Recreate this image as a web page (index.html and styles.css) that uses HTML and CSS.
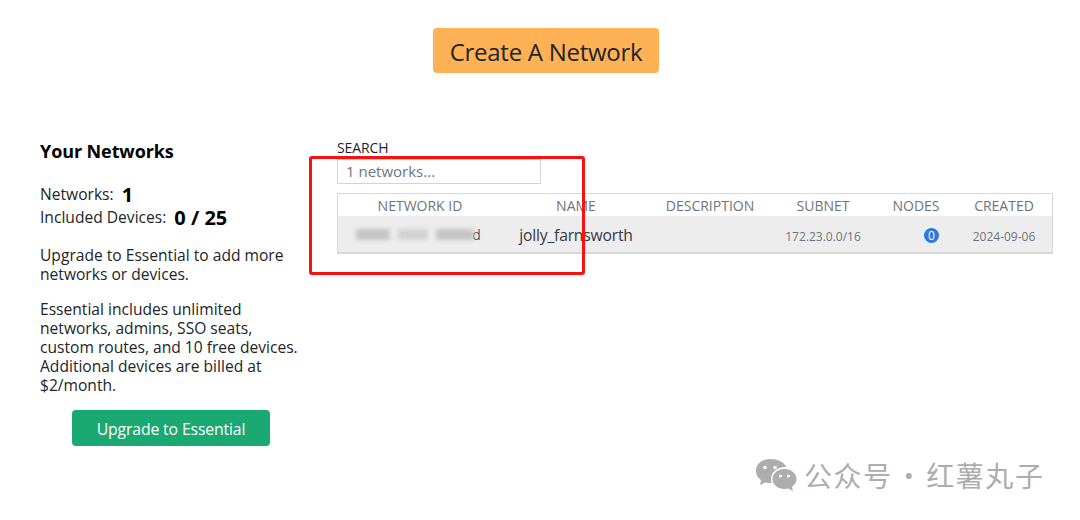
FILE: index.html
```html
<!DOCTYPE html>
<html lang="en">
<head>
<meta charset="utf-8">
<title>Networks</title>
<link rel="stylesheet" href="styles.css">
</head>
<body>
<div class="page">
  <header class="top">
    <button class="create">Create A Network</button>
  </header>
  <main class="main">
    <aside class="side">
      <h2 class="side-title">Your Networks</h2>
      <div class="stat"><span>Networks:</span><b class="stat-val">1</b></div>
      <div class="stat"><span>Included Devices:</span><b class="stat-val">0 / 25</b></div>
      <p class="para first">Upgrade to Essential to add more networks or devices.</p>
      <p class="para">Essential includes unlimited networks, admins, SSO seats, custom routes, and 10 free devices. Additional devices are billed at $2/month.</p>
      <div class="upgrade-wrap"><button class="upgrade">Upgrade to Essential</button></div>
    </aside>
    <section class="content">
      <label class="search-label" for="s">SEARCH</label>
      <input id="s" class="search" placeholder="1 networks...">
      <div class="table">
        <div class="row head">
          <div class="c-id">NETWORK ID</div>
          <div class="c-name">NAME</div>
          <div class="c-desc">DESCRIPTION</div>
          <div class="c-sub">SUBNET</div>
          <div class="c-nodes">NODES</div>
          <div class="c-created">CREATED</div>
        </div>
        <div class="row body">
          <div class="c-id id-val"><span class="blurred"><i class="b1"></i><i class="b2"></i><i class="b3"></i></span><span class="tail">d</span></div>
          <div class="c-name name-val">jolly_farnsworth</div>
          <div class="c-desc"></div>
          <div class="c-sub small">172.23.0.0/16</div>
          <div class="c-nodes"><span class="badge">0</span></div>
          <div class="c-created small">2024-09-06</div>
        </div>
      </div>
    </section>
  </main>
  <div class="annot"></div>
  <div class="mark">
    <svg class="mark-icon" width="42" height="34" viewBox="0 0 42 34">
      <path class="m" d="M15 1C7 1 1 6.300 1 13c0 3.800 2 7 5 9.200L5 27l5.300-2.600c1.500.4 3 .6 4.700.6.600 0 1.200 0 1.700-.1-.5-1.300-.7-2.600-.7-4 0-6.800 6.200-12 13.800-12 .4 0 .8 0 1.200.1C29.700 4.300 23 1 15 1z"/>
      <circle class="e" cx="10" cy="9.500" r="1.800"/><circle class="e" cx="20" cy="9.500" r="1.800"/>
      <path class="m" d="M29.500 11C22.600 11 17.500 15.500 17.500 21s5.100 10 12 10c1.300 0 2.600-.2 3.800-.5l4.700 2.500-1-4.200c2.800-1.900 4.500-4.700 4.500-7.800 0-5.500-5.100-10-12-10z"/>
      <circle class="e" cx="25.500" cy="18" r="1.600"/><circle class="e" cx="33.500" cy="18" r="1.600"/>
    </svg>
    <span class="mark-text">公众号 · 红薯丸子</span>
  </div>
</div>
</body>
</html>
```

FILE: styles.css
```css
* { box-sizing: border-box; }
html, body { margin: 0; padding: 0; background: #fff; }
.page {
  position: relative;
  width: 1080px;
  height: 520px;
  overflow: hidden;
  font-family: "Open Sans", "Noto Sans", sans-serif;
  color: #212529;
}
.top {
  display: flex;
  padding: 28px 0 0 433px;
}
.create {
  width: 226px;
  height: 45px;
  border: 0;
  border-radius: 4px;
  background: #ffb155;
  color: #212529;
  font: 24px/1 "Open Sans", sans-serif;
  letter-spacing: -0.28px;
  padding: 2px 0 0;
}
.main {
  display: flex;
  padding: 66px 0 0 40px;
}
.side {
  width: 258px;
  margin-right: 39px;
  font-size: 15.6px;
  letter-spacing: 0;
  line-height: 19px;
}
.side-title {
  margin: 1px 0 0;
  font-size: 18px;
  line-height: 22px;
  font-weight: 700;
  color: #000;
  letter-spacing: -0.1px;
}
.stat {
  display: flex;
  align-items: center;
  height: 23px;
  gap: 8px;
}
.side-title + .stat { margin-top: 21px; }
.stat-val {
  font-size: 20px;
  font-weight: 700;
  color: #000;
  letter-spacing: 0;
}
.para { margin: 16px 0 0; }
.para.first { margin-top: 17px; }
.upgrade-wrap {
  display: flex;
  padding: 15px 0 0 32px;
}
.upgrade {
  width: 198px;
  height: 36px;
  border: 0;
  border-radius: 4px;
  background: #1aa873;
  color: #fff;
  font: 15.8px/1 "Open Sans", sans-serif;
  letter-spacing: -0.15px;
  padding: 3px 0 0;
}
.content {
  width: 716px;
  display: flex;
  flex-direction: column;
  align-items: flex-start;
}
.search-label {
  font-size: 14px;
  line-height: 18px;
  height: 20px;
  letter-spacing: -0.1px;
  color: #212529;
}
.search {
  width: 204px;
  height: 25px;
  border: 1px solid #ced4da;
  padding: 0 8px 2px;
  font: 15px "Open Sans", sans-serif;
  letter-spacing: 0;
  outline: 0;
}
.search::placeholder { color: #6c757d; opacity: 1; }
.table {
  width: 716px;
  margin-top: 9px;
  border: 1px solid #d8d8d8;
  border-bottom-width: 2px;
}
.row {
  display: grid;
  grid-template-columns: 164px 148px 120px 106px 80px 96px;
  align-items: center;
  text-align: center;
}
.head {
  height: 22px;
  font-size: 14px;
  letter-spacing: 0;
  color: #6c757d;
}
.body {
  height: 36px;
  background: #ededed;
  color: #6c757d;
}
.c-nodes { display: flex; justify-content: center; }
.body .c-nodes { justify-content: flex-end; padding-right: 17px; }
.c-id { display: flex; justify-content: center; align-items: center; }
.id-val { padding-right: 3px; }
.blurred { display: flex; align-items: center; filter: blur(2px); height: 12px; }
.blurred i { display: block; height: 11px; background: #c4c4c4; }
.b1 { width: 34px; }
.b2 { width: 30px; margin-left: 8px; background: #d2d2d2 !important; }
.b3 { width: 38px; margin-left: 8px; }
.tail { font-size: 14px; color: #555; margin-left: -2px; }
.name-val { font-size: 15.7px; letter-spacing: -0.2px; color: #343a40; padding-top: 2px; }
.small { font-size: 12px; letter-spacing: 0; padding-top: 5px; }
.badge {
  width: 15px;
  height: 15px;
  margin-top: 3px;
  border-radius: 50%;
  background: #2f78dc;
  color: #fff;
  font-size: 12px;
  line-height: 15px;
}
.annot {
  position: absolute;
  left: 309px;
  top: 156px;
  width: 276px;
  height: 119px;
  border: 3px solid #f91010;
  border-radius: 3px;
}
.mark {
  position: absolute;
  left: 755px;
  top: 458px;
  display: flex;
  align-items: center;
  gap: 7px;
  color: #adadad;
}
.mark-icon { display: block; }
.m { fill: #adadad; }
.e { fill: #fff; }
.mark-text {
  font: 28px/1 "Noto Sans CJK SC", sans-serif;
  letter-spacing: 1.6px;
  word-spacing: -6px;
  white-space: pre;
}
```
